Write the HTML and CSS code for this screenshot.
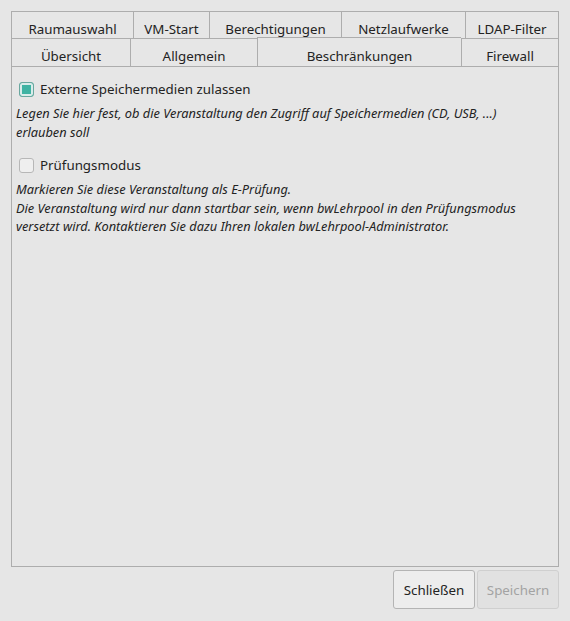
FILE: index.html
```html
<!DOCTYPE html>
<html lang="de">
<head>
    <meta charset="UTF-8">
    <title>Veranstaltung bearbeiten</title>
    <link rel="stylesheet" href="styles.css">
</head>
<body>
    <div class="dialog">
        <div class="tabs">
            <div class="tab-row">
                <div class="tab tab-raum">Raumauswahl</div>
                <div class="tab tab-vm">VM-Start</div>
                <div class="tab tab-rechte">Berechtigungen</div>
                <div class="tab tab-netz">Netzlaufwerke</div>
                <div class="tab tab-ldap last">LDAP-Filter</div>
            </div>
            <div class="tab-row">
                <div class="tab tab-uebersicht">Übersicht</div>
                <div class="tab tab-allgemein">Allgemein</div>
                <div class="tab tab-beschr active">Beschränkungen</div>
                <div class="tab tab-firewall last">Firewall</div>
            </div>
        </div>
        <div class="panel">
            <label class="option">
                <span class="check checked"></span>
                Externe Speichermedien zulassen
            </label>
            <p class="hint">Legen Sie hier fest, ob die Veranstaltung den Zugriff auf Speichermedien (CD, USB, ...) erlauben soll</p>

            <label class="option">
                <span class="check"></span>
                Prüfungsmodus
            </label>
            <p class="hint">Markieren Sie diese Veranstaltung als E-Prüfung.<br>
                Die Veranstaltung wird nur dann startbar sein, wenn bwLehrpool in den Prüfungsmodus versetzt wird. Kontaktieren Sie dazu Ihren lokalen bwLehrpool-Administrator.</p>
        </div>
        <div class="buttons">
            <button class="btn">Schließen</button>
            <button class="btn" disabled>Speichern</button>
        </div>
    </div>
</body>
</html>
```

FILE: styles.css
```css
body {
    margin: 0;
    background-color: #e6e6e6;
    font-family: "Noto Sans", sans-serif;
    font-size: 13.33px;
    color: #232323;
}

.dialog {
    padding: 11px 11px 12px 11px;
    width: 548px;
}

.tab-row {
    display: flex;
    height: 27px;
}

.tab-row + .tab-row {
    height: 28px;
}

.tab {
    box-sizing: border-box;
    border-left: 1px solid #adadad;
    border-top: 1px solid #adadad;
    text-align: center;
    padding-top: 8px;
    line-height: 18px;
    background-color: #e6e6e6;
    white-space: nowrap;
}

.tab.last {
    border-right: 1px solid #adadad;
    flex-grow: 1;
}

.tab.active {
    margin-top: -1px;
    padding-top: 9px;
}

/* Reiterbreiten wie im Original */
.tab-raum { width: 122px; }
.tab-vm { width: 76px; }
.tab-rechte { width: 132px; }
.tab-netz { width: 124px; }
.tab-uebersicht { width: 119px; }
.tab-allgemein { width: 127px; }
.tab-beschr { width: 204px; }

.panel {
    box-sizing: border-box;
    height: 501px;
    border: 1px solid #adadad;
    padding: 13px 16px 0 4px;
}

.option {
    display: flex;
    align-items: center;
    gap: 6px;
    margin-left: 3px;
    height: 18px;
    line-height: 18px;
    color: #232323;
}

.check {
    box-sizing: border-box;
    width: 15px;
    height: 15px;
    border: 1px solid #b7b7b7;
    border-radius: 3px;
    background-color: #efefef;
}

.check.checked {
    border-color: #6aa79f;
    background-color: #3fb3a3;
    box-shadow: inset 0 0 0 2px #d9ecea;
}

.hint {
    margin: 6px 0 15px 0;
    font-style: italic;
    font-size: 12.8px;
    line-height: 18.5px;
    color: #232323;
}

.buttons {
    display: flex;
    justify-content: flex-end;
    gap: 2px;
    margin-top: 3px;
}

.btn {
    font-family: "Noto Sans", sans-serif;
    font-size: 13.33px;
    color: #232323;
    background-color: #ededed;
    border: 1px solid #b4b4b4;
    border-radius: 3px;
    height: 39px;
    width: 82px;
    padding: 0;
}

.btn:disabled {
    color: #a3a3a3;
    background-color: #e1e1e1;
    border-color: #cfcfcf;
}
```
